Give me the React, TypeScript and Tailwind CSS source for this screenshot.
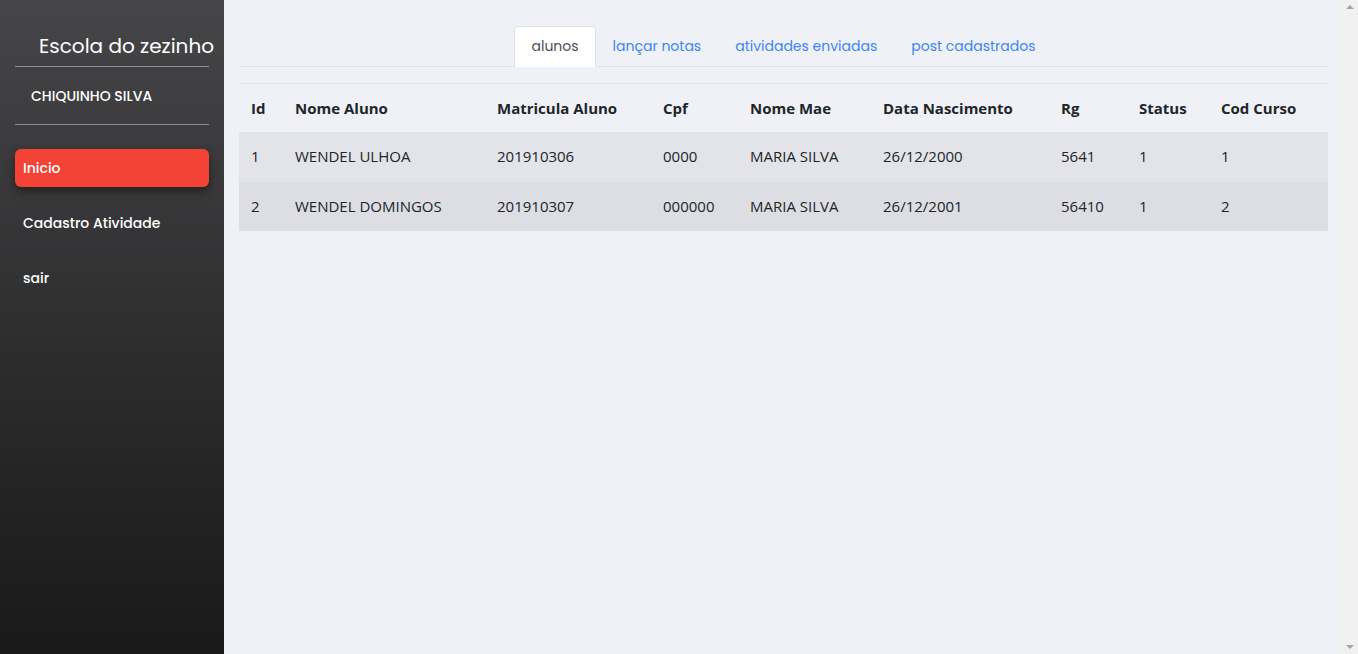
const MENU = [
  { label: "Inicio", active: true },
  { label: "Cadastro Atividade", active: false },
  { label: "sair", active: false },
];

const TABS = ["alunos", "lançar notas", "atividades enviadas", "post cadastrados"];

const COLS = [
  { label: "Id", w: "w-[44px]" },
  { label: "Nome Aluno", w: "w-[202px]" },
  { label: "Matricula Aluno", w: "w-[166px]" },
  { label: "Cpf", w: "w-[87px]" },
  { label: "Nome Mae", w: "w-[133px]" },
  { label: "Data Nascimento", w: "w-[178px]" },
  { label: "Rg", w: "w-[78px]" },
  { label: "Status", w: "w-[82px]" },
  { label: "Cod Curso", w: "w-[119px]" },
];

const ALUNOS = [
  ["1", "WENDEL ULHOA", "201910306", "0000", "MARIA SILVA", "26/12/2000", "5641", "1", "1"],
  ["2", "WENDEL DOMINGOS", "201910307", "000000", "MARIA SILVA", "26/12/2001", "56410", "1", "2"],
];

function Sidebar() {
  return (
    <aside className="flex w-[224px] shrink-0 flex-col bg-gradient-to-b from-[#464648] to-[#19191a] px-[15px] font-['Poppins','Inter',sans-serif] text-white">
      <h1 className="mt-[33px] pl-[24px] text-[20px] leading-[26px] whitespace-nowrap">Escola do zezinho</h1>
      <hr className="mt-[7px] border-t border-[#8e8e90]" />
      <div className="mt-[20px] pl-[16px] text-[14px] leading-[18px] font-medium">CHIQUINHO SILVA</div>
      <hr className="mt-[19px] border-t border-[#8e8e90]" />
      <nav className="mt-[24px] flex flex-col gap-[17px]">
        {MENU.map((m) => (
          <a
            key={m.label}
            href="#"
            className={`flex h-[38px] items-center rounded-md px-2 text-[14px] font-medium ${
              m.active ? "bg-[#f44336] shadow-[0_4px_10px_rgba(0,0,0,0.45)]" : ""
            }`}
          >
            {m.label}
          </a>
        ))}
      </nav>
    </aside>
  );
}

function ScrollTrack() {
  return (
    <div className="flex w-[17px] shrink-0 flex-col items-center justify-between bg-[#f1f1f1] py-[5px]">
      <div className="h-0 w-0 border-x-[4px] border-b-[4px] border-x-transparent border-b-[#a3a3a3]" />
      <div className="h-0 w-0 border-x-[4px] border-t-[4px] border-x-transparent border-t-[#a3a3a3]" />
    </div>
  );
}

export default function App() {
  return (
    <div className="flex h-[654px] overflow-hidden bg-[#f0f1f6]">
      <Sidebar />
      <main className="h-full flex-1 pt-[26px] pl-[15px] pr-[13px]">
        <ul className="flex justify-center border-b border-[#dee2e6] font-['Poppins','Inter',sans-serif] text-[14px]">
          {TABS.map((t, i) => (
            <li key={t} className="-mb-px">
              <a
                href="#"
                className={`block h-[41px] rounded-t border px-4 leading-[39px] ${
                  i === 0
                    ? "border-[#dee2e6] border-b-white bg-white text-[#495057]"
                    : "border-transparent text-[#3b86f7]"
                }`}
              >
                {t}
              </a>
            </li>
          ))}
        </ul>

        <table className="mt-4 w-full table-fixed border-collapse font-['Open_Sans','Noto_Sans',sans-serif] text-[15px] text-[#212529]">
          <colgroup>
            {COLS.map((c) => (
              <col key={c.label} className={c.w} />
            ))}
          </colgroup>
          <thead>
            <tr className="h-[48px] border-t border-[#dee2e6]">
              {COLS.map((c) => (
                <th key={c.label} className="px-3 text-left font-bold whitespace-nowrap">
                  {c.label}
                </th>
              ))}
            </tr>
          </thead>
          <tbody>
            {ALUNOS.map((row, i) => (
              <tr key={i} className={i === 0 ? "h-[50px] bg-[#e3e4e9]" : "h-[49px] bg-[#dddee3]"}>
                {row.map((v, j) => (
                  <td key={j} className="px-3 whitespace-nowrap">
                    {v}
                  </td>
                ))}
              </tr>
            ))}
          </tbody>
        </table>
      </main>
      <ScrollTrack />
    </div>
  );
}
